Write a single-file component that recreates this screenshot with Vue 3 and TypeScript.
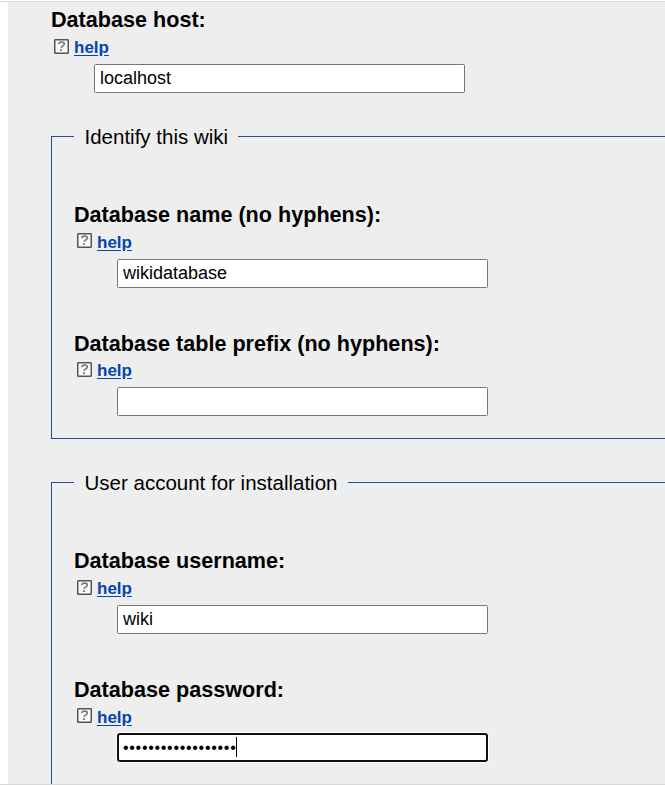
<script setup lang="ts">
import { reactive } from 'vue'

interface Field {
  id: string
  label: string
  value: string
  type: 'text' | 'password'
}
interface Group {
  id: string
  legend: string
  fields: Field[]
}
interface Section {
  id: string
  host?: Field
  group?: Group
}

const sections = reactive<Section[]>([
  { id: 's-host', host: { id: 'host', label: 'Database host:', value: 'localhost', type: 'text' } },
  {
    id: 's-wiki',
    group: {
      id: 'wiki',
      legend: 'Identify this wiki',
      fields: [
        { id: 'name', label: 'Database name (no hyphens):', value: 'wikidatabase', type: 'text' },
        { id: 'prefix', label: 'Database table prefix (no hyphens):', value: '', type: 'text' },
      ],
    },
  },
  {
    id: 's-account',
    group: {
      id: 'account',
      legend: 'User account for installation',
      fields: [
        { id: 'username', label: 'Database username:', value: 'wiki', type: 'text' },
        { id: 'password', label: 'Database password:', value: '••••••••••••••••••', type: 'password' },
      ],
    },
  },
])
</script>

<template>
  <div class="page">
    <main class="content">
      <component
        :is="s.group ? 'section' : 'div'"
        v-for="s in sections"
        :key="s.id"
        :class="s.group ? ['group', s.group.id] : 'single'"
      >
        <div v-if="s.group" class="legend">
          <span class="rule short"></span>
          <h2>{{ s.group.legend }}</h2>
          <span class="rule"></span>
        </div>
        <div v-for="f in s.group ? s.group.fields : [s.host!]" :key="f.id" :class="['field', f.id]">
          <label :for="f.id">{{ f.label }}</label>
          <div class="help">
            <svg width="15" height="15" viewBox="0 0 15 15" aria-hidden="true">
              <rect x=".75" y=".75" width="13.5" height="13.5" rx=".6" fill="#fbfbfb" stroke="#555" stroke-width="1.5" />
              <path d="M4.7 5.2C4.9 3.6 6 3.1 7.6 3.1C9.4 3.1 10.4 3.8 10.4 4.9C10.4 6.7 7.4 6.9 7.1 8.8" fill="none" stroke="#777" stroke-width="1.6" />
              <path d="M6 10.2h1.9v1.7H6z" fill="#777" />
            </svg>
            <a href="#">help</a>
          </div>
          <div v-if="f.type === 'password'" class="box focused">
            <span class="dots">{{ f.value }}</span><i class="caret"></i>
          </div>
          <input v-else :id="f.id" v-model="f.value" class="box" type="text" />
        </div>
      </component>
    </main>
  </div>
</template>

<style>
body { background: #fff; overflow: hidden; }
</style>

<style scoped>
.page {
  box-sizing: border-box;
  height: 785px;
  padding-top: 1px;
  border-bottom: 1px solid #d8d8d8;
  overflow: hidden;
  font-family: "Liberation Sans", Arial, sans-serif;
  color: #000;
  background: linear-gradient(#d9dcdc, #d9dcdc) 0 1px / 100% 1px no-repeat, #fff;
}
.content {
  box-sizing: border-box;
  height: 782px;
  margin-top: 1px;
  margin-left: 8px;
  padding: 3px 0 0 43px;
  background: #eee;
  overflow: hidden;
}
.group {
  box-sizing: border-box;
  border-left: 1px solid #2a4b8d;
  padding-left: 22px;
}
.wiki { height: 303px; margin-top: 43px; border-bottom: 1px solid #2a4b8d; }
.account { height: 310px; margin-top: 43px; }
.legend { height: 1px; display: flex; align-items: center; margin-left: -22px; }
.legend h2 {
  margin: 0;
  padding: 0 10.4px 0 10.5px;
  font-size: 20.5px;
  line-height: 24px;
  font-weight: 400;
  white-space: nowrap;
}
.rule { height: 1px; flex: 1; background: #2a4b8d; }
.rule.short { flex: 0 0 22px; }
.field { height: 88px; }
.group .field { height: 86px; padding-top: 42px; }
.group .legend + .field { padding-top: 63px; }
label { display: block; height: 32px; line-height: 29px; font-size: 21.6px; font-weight: 700; white-space: nowrap; }
.prefix label, .password label { line-height: 31px; }
.help { display: flex; height: 20px; align-items: flex-start; gap: 5px; padding-left: 3px; }
.help svg { margin-top: 2px; }
.name .help svg { margin-top: 1px; }
.help a { margin-top: 1px; font-size: 17px; line-height: 20px; font-weight: 700; color: #0645ad; text-underline-offset: 2px; }
.password .help a { margin-top: 2px; }
.box {
  box-sizing: border-box;
  display: flex;
  align-items: center;
  margin: 7px 0 0 43px;
  width: 371px;
  height: 29px;
  padding: 0 5px;
  border: 1px solid #767676;
  border-radius: 1.5px;
  background: #fff;
  font: 18px "Liberation Sans", Arial, sans-serif;
  color: #000;
}
.focused { border: 2px solid #101010; border-radius: 3px; padding: 0 4px; box-shadow: 0 0 0 1px #fff; }
.dots { font-size: 16px; letter-spacing: 0.7px; }
.caret { width: 1px; height: 20px; margin-bottom: 1px; background: #000; }
</style>
